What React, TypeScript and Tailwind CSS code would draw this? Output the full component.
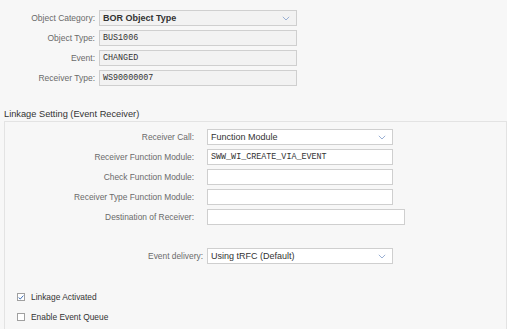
import React from "react";

const sans = "font-['Liberation_Sans',Arial,sans-serif]";
const mono = "font-['Liberation_Mono','Courier_New',monospace]";

function Chevron() {
  return (
    <svg width="8" height="5" viewBox="0 0 8 5" className="shrink-0">
      <polyline points="0.8,0.8 4,4 7.2,0.8" fill="none" stroke="#9ab0d4" strokeWidth="1" />
    </svg>
  );
}

function Select({ value, width, bold, grey }: { value: string; width: string; bold?: boolean; grey?: boolean }) {
  return (
    <div
      className={`flex h-[16px] ${width} items-center justify-between border border-[#cfcfcf] pl-[3px] pr-[6px] ${grey ? "bg-[#f2f2f2]" : "bg-white"}`}
    >
      <span className={`text-[9px] leading-none text-[#333] ${bold ? "font-semibold" : ""}`}>{value}</span>
      <Chevron />
    </div>
  );
}

function Field({ value, width, grey }: { value?: string; width: string; grey?: boolean }) {
  return (
    <div
      className={`flex h-[16px] ${width} items-center border border-[#cfcfcf] pl-[3px] ${grey ? "bg-[#f2f2f2]" : "bg-white"}`}
    >
      <span className={`${mono} text-[8.4px] leading-none text-[#333]`}>{value}</span>
    </div>
  );
}

function Label({ text, pr = "pr-[4px]", size = "text-[8.5px]" }: { text: string; pr?: string; size?: string }) {
  return (
    <div className={`flex h-[16px] items-center justify-end ${pr} ${size} text-[#6a6a6a]`}>{text}</div>
  );
}

function Check({ label, checked }: { label: string; checked?: boolean }) {
  return (
    <div className="flex h-[14px] items-center pl-[12px]">
      <div className="flex h-[8px] w-[8px] items-center justify-center border border-[#a0a0a0] bg-white">
        {checked && (
          <svg width="6" height="5" viewBox="0 0 6 5">
            <polyline points="0.6,2.6 2.3,4 5.4,0.6" fill="none" stroke="#3f6fb5" strokeWidth="1" />
          </svg>
        )}
      </div>
      <span className="ml-[6px] text-[8.4px] text-[#333]">{label}</span>
    </div>
  );
}

export default function App() {
  return (
    <div className={`${sans} h-[329px] w-[507px] overflow-hidden bg-[#f7f7f7]`}>
      <div className="grid grid-cols-[99px_198px] gap-y-[4px] pt-[10px]">
        <Label text="Object Category:" />
        <Select value="BOR Object Type" width="w-[198px]" bold grey />
        <Label text="Object Type:" />
        <Field value="BUS1006" width="w-[198px]" grey />
        <Label text="Event:" />
        <Field value="CHANGED" width="w-[198px]" grey />
        <Label text="Receiver Type:" />
        <Field value="WS90000007" width="w-[198px]" grey />
      </div>

      <div className="mt-[22px] pl-[4px] text-[9.25px] leading-[12px] text-[#333]">Linkage Setting (Event Receiver)</div>

      <div className="ml-[4px] mt-[1px] h-[220px] border-x border-t border-[#e3e3e3]">
        <div className="grid grid-cols-[202px_auto] gap-y-[4px] pt-[7px]">
          <Label text="Receiver Call:" pr="pr-[13px]" size="text-[8.4px]" />
          <Select value="Function Module" width="w-[186px]" />
          <Label text="Receiver Function Module:" pr="pr-[13px]" size="text-[8.4px]" />
          <Field value="SWW_WI_CREATE_VIA_EVENT" width="w-[186px]" />
          <Label text="Check Function Module:" pr="pr-[13px]" size="text-[8.4px]" />
          <Field width="w-[186px]" />
          <Label text="Receiver Type Function Module:" pr="pr-[13px]" size="text-[8.4px]" />
          <Field width="w-[186px]" />
          <Label text="Destination of Receiver:" pr="pr-[13px]" size="text-[8.4px]" />
          <Field width="w-[198px]" />
        </div>

        <div className="mt-[23px] grid grid-cols-[202px_auto]">
          <Label text="Event delivery:" pr="pr-[4px]" size="text-[8.4px]" />
          <Select value="Using tRFC (Default)" width="w-[186px]" />
        </div>

        <div className="mt-[26px] flex flex-col gap-[6px]">
          <Check label="Linkage Activated" checked />
          <Check label="Enable Event Queue" />
        </div>
      </div>
    </div>
  );
}
